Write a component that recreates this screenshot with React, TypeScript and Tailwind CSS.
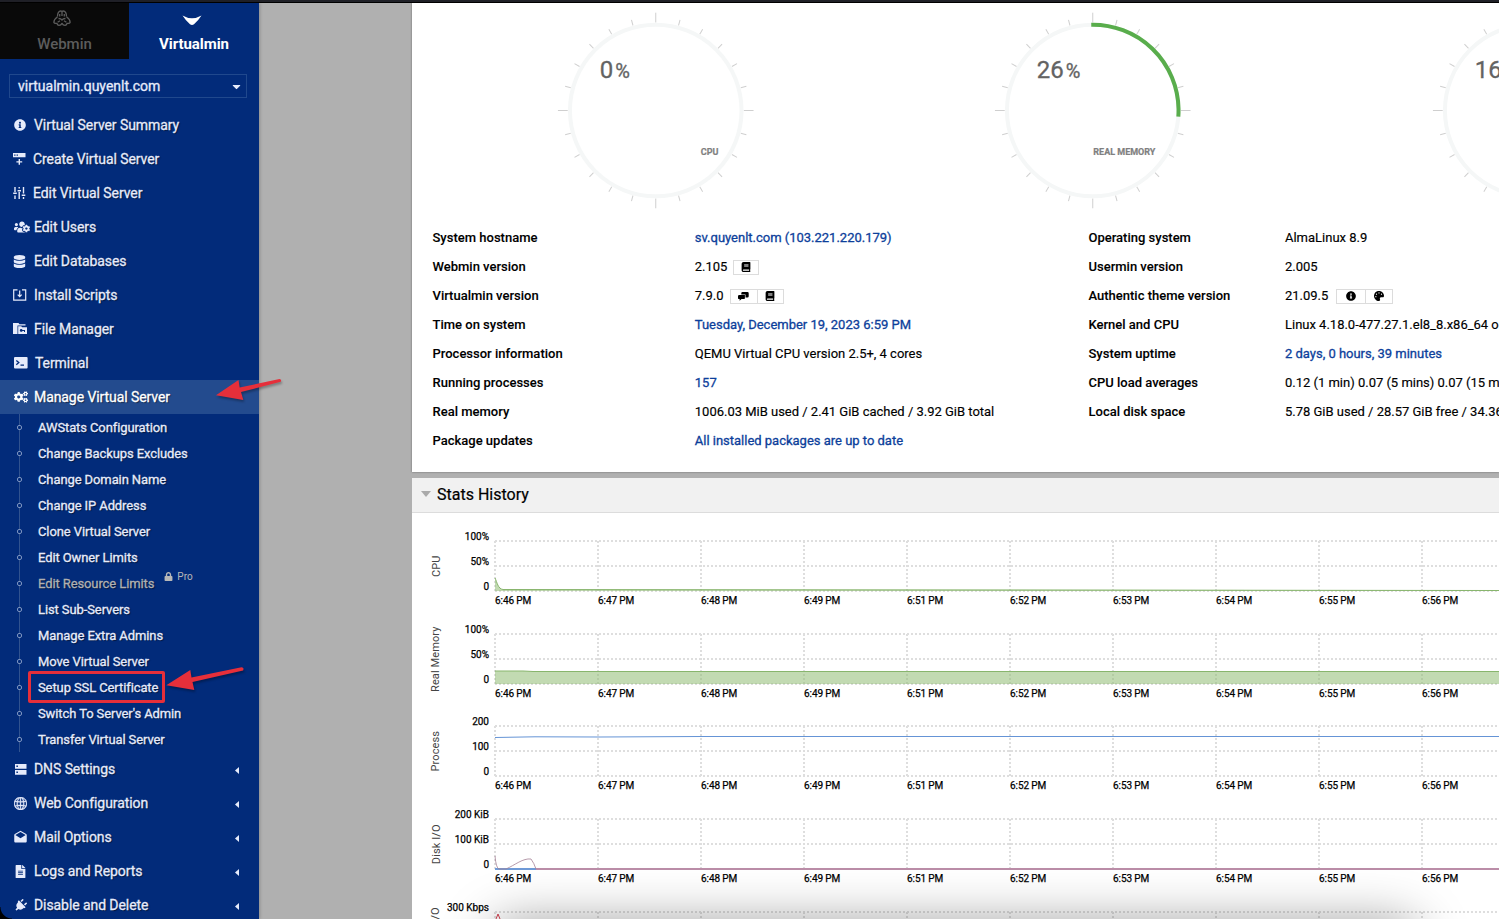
import type { ReactNode } from 'react';
import {
  FaBook, FaCaretDown, FaCogs, FaDatabase, FaFileAlt, FaInfoCircle,
  FaLock, FaPalette, FaPlug, FaUsersCog,
} from 'react-icons/fa';
import { MdDrafts } from 'react-icons/md';
import { SlGlobe } from 'react-icons/sl';

const CreateIcon = () => (
  <svg width="13" height="12" viewBox="0 0 13 12" fill="currentColor">
    <path fillRule="evenodd" d="M0 0h12.5v4.2H0zM1.2 1.4v1.3h1.3V1.4zM3.6 1.4v1.3h1.3V1.4z" />
    <path d="M5.6 6h1.4v2.2h2.2v1.4H7V11.8H5.6V9.600H3.400V8.200H5.600z" />
  </svg>
);

const SlidersIcon = () => (
  <svg width="13" height="12" viewBox="0 0 13 12" stroke="currentColor" strokeWidth="1.4">
    <path d="M2 0v5M2 8.500v3.500M6.200 0v1.500M6.200 5v7M10.500 0v6.500M10.500 10v2M.2 6.200h3.600M4.600 3.800h3.400M8.700 8.200h3.600" />
  </svg>
);

const InstallIcon = () => (
  <svg width="14" height="12" viewBox="0 0 14 12" fill="none" stroke="currentColor" strokeWidth="1.200">
    <path d="M4.500 .8H.7v10.400h12V.8H9M6.700 1.500v6M4.700 5.700l2 2 2-2" />
  </svg>
);

const FolderIcon = () => (
  <svg width="14" height="12" viewBox="0 0 14 12" fill="currentColor">
    <path d="M0 0h5.500l1 1.300h6v1.300H4.500V11H0z" />
    <path fillRule="evenodd" d="M5.200 3.300h3l1 1H14V11H5.200zM8.200 6a1.400 1.400 0 1 0 1.300 1.900H11v1h1v-1.800H9.500A1.400 1.400 0 0 0 8.200 6z" />
  </svg>
);

const TerminalIcon = () => (
  <svg width="14" height="12" viewBox="0 0 14 12">
    <rect width="13.600" height="11.600" rx="1" fill="currentColor" />
    <path d="M2.300 3.400l2.500 2.200-2.500 2.200M6.500 8.200h3.500" stroke="#022b7a" strokeWidth="1.300" fill="none" />
  </svg>
);

const DnsIcon = () => (
  <svg width="12" height="11" viewBox="0 0 12 11" fill="currentColor">
    <path fillRule="evenodd" d="M0 0h11.500v4.800H0zM1.400 1.600v1.500h1.500V1.600zM0 6h11.500v4.800H0zM1.400 7.600v1.500h1.500V7.600z" />
  </svg>
);

const ChatIcon = () => (
  <svg width="11" height="9" viewBox="0 0 11 9" fill="currentColor">
    <path d="M4.500 0h5a1.200 1.200 0 0 1 1.200 1.200v3a1.200 1.200 0 0 1-1.200 1.200H7.500V2.500H3.300V1.200A1.200 1.200 0 0 1 4.500 0z" />
    <path d="M1.200 3H6.900v2.900a1.200 1.200 0 0 1-1.200 1.200H3.500L1.600 8.800V7.100H1.200A1.200 1.200 0 0 1 0 5.900V4.200A1.200 1.200 0 0 1 1.200 3z" />
  </svg>
);

const WebminLogo = () => (
  <svg width="18" height="17" viewBox="0 0 18 17" fill="none" stroke="currentColor" strokeWidth="1.300" strokeLinejoin="round">
    <path d="M9 6V2.400Q9 1 7.800 1 4.600 1.200 4.500 6.500M9 6V2.400Q9 1 10.200 1 13.400 1.200 13.500 6.500M6.700 6.500V4M11.300 6.500V4" />
    <path d="M4.500 6.800Q.8 9.500.9 12.500q.4 1.300 3.300.8M13.500 6.800q3.700 2.700 3.600 5.700-.4 1.300-3.300.8M4.200 13.300q0 2 1.800 2 2 0 3-1.900 1 1.900 3 1.900 1.800 0 1.800-2M4.600 12.200L7 10.700M13.400 12.200L11 10.700M5.500 8.500q2.300-.1 3.500 1.500 1.200-1.600 3.500-1.500" />
  </svg>
);

type MenuEntry = { label: string; icon: ReactNode; pad?: string };

const topMenu: MenuEntry[] = [
  { label: 'Virtual Server Summary', icon: <FaInfoCircle size={12} />, pad: 'ml-[14px] w-5' },
  { label: 'Create Virtual Server', icon: <CreateIcon />, pad: 'ml-[13px] w-5' },
  { label: 'Edit Virtual Server', icon: <SlidersIcon />, pad: 'ml-[13px] w-5' },
  { label: 'Edit Users', icon: <FaUsersCog size={16} />, pad: 'ml-[14px] w-5' },
  { label: 'Edit Databases', icon: <FaDatabase size={13} />, pad: 'ml-[13px] w-[21px]' },
  { label: 'Install Scripts', icon: <InstallIcon />, pad: 'ml-[13px] w-[21px]' },
  { label: 'File Manager', icon: <FolderIcon />, pad: 'ml-[13px] w-[21px]' },
  { label: 'Terminal', icon: <TerminalIcon />, pad: 'ml-[14px] w-[21px]' },
];

const bottomMenu: MenuEntry[] = [
  { label: 'DNS Settings', icon: <DnsIcon />, pad: 'ml-[15px] w-[19px]' },
  { label: 'Web Configuration', icon: <SlGlobe size={13} strokeWidth={30} />, pad: 'ml-[14px] w-5' },
  { label: 'Mail Options', icon: <MdDrafts size={15} />, pad: 'ml-[13px] w-[21px]' },
  { label: 'Logs and Reports', icon: <FaFileAlt size={13} />, pad: 'ml-[14px] w-5' },
  { label: 'Disable and Delete', icon: <FaPlug size={13} className="rotate-45" />, pad: 'ml-[14px] w-5' },
];

const subMenu = [
  'AWStats Configuration', 'Change Backups Excludes', 'Change Domain Name',
  'Change IP Address', 'Clone Virtual Server', 'Edit Owner Limits',
  'Edit Resource Limits', 'List Sub-Servers', 'Manage Extra Admins',
  'Move Virtual Server', 'Setup SSL Certificate', "Switch To Server's Admin",
  'Transfer Virtual Server',
];

function MenuItem({ item, caret, active }: { item: MenuEntry; caret?: boolean; active?: boolean }) {
  return (
    <li className={`flex h-[34px] items-center ${active ? 'bg-[#234b8e] text-white' : ''}`}>
      <span className={`flex shrink-0 items-center ${item.pad}`}>{item.icon}</span>
      <span className="text-[14px] tracking-[-0.08px] [-webkit-text-stroke:0.3px] [text-shadow:1px_1px_1px_rgba(0,0,0,0.5)]">{item.label}</span>
      {caret && (
        <svg className="mt-0.5 mr-5 ml-auto" width="4" height="7" viewBox="0 0 4 7">
          <path d="M4 0v7L0 3.500z" fill="currentColor" />
        </svg>
      )}
    </li>
  );
}

function Sidebar() {
  return (
    <aside className="relative z-10 h-full w-[259px] shrink-0 bg-[#022b7a] text-[#e6ebfb] shadow-[1px_0_3px_rgba(0,0,0,0.2)]">
      <div className="flex h-14">
        <div className="flex w-[129px] flex-col items-center bg-[#090909] pt-[7px] text-[#5c5c5c]">
          <div className="-ml-1.5"><WebminLogo /></div>
          <span className="mt-[5px] text-[15px] leading-[24px] font-medium">Webmin</span>
        </div>
        <div className="flex w-[130px] flex-col items-center pt-3 text-white">
          <svg className="-ml-1" width="20" height="11" viewBox="0 0 20 11">
            <path d="M.5.500Q10 6 19.500.500 16 6 12 9.300q-2 1.500-4 0Q4 6 .5.500z" fill="currentColor" />
          </svg>
          <span className="mt-[6px] text-[15px] leading-[24px] font-bold tracking-[-0.06px]">Virtualmin</span>
        </div>
      </div>
      <div className="mt-[15px] ml-[9px] flex h-6 w-[238px] items-center justify-between border border-[#20488d] pr-[3px] pl-2">
        <span className="text-[14px] [-webkit-text-stroke:0.3px]">virtualmin.quyenlt.com</span>
        <FaCaretDown size={13} />
      </div>
      <ul className="mt-[10px]">
        {topMenu.map((item) => <MenuItem key={item.label} item={item} />)}
        <MenuItem item={{ label: 'Manage Virtual Server', icon: <FaCogs size={14} />, pad: 'ml-[14px] w-5' }} active />
      </ul>
      <ul className="ml-[19px] border-l border-[#31538f]">
        {subMenu.map((label) => (
          <li key={label} className="flex h-[26px] items-center">
            <span className="mt-px -ml-[3px] h-[5px] w-[5px] shrink-0 rounded-[2px] border border-[#7d94c0] bg-[#022b7a]" />
            <span
              className={`mt-0.5 ml-4 text-[13px] tracking-[-0.1px] [-webkit-text-stroke:0.3px] [text-shadow:1px_1px_1px_rgba(0,0,0,0.5)] ${label === 'Edit Resource Limits' ? 'text-[#b0b0b0]' : ''}`}
            >
              {label}
            </span>
            {label === 'Edit Resource Limits' && (
              <span className="mb-[13px] ml-[10px] flex items-center gap-1 text-[10px] text-[#b8b8b8]">
                <FaLock size={9} />
                Pro
              </span>
            )}
          </li>
        ))}
      </ul>
      <ul>
        {bottomMenu.map((item) => <MenuItem key={item.label} item={item} caret />)}
      </ul>
      {/* callouts */}
      <svg className="absolute top-[374px] left-[214px] drop-shadow-[1px_2px_1px_rgba(0,0,0,0.3)]" width="70" height="30" viewBox="0 0 70 30">
        <path d="M2 18.300L24.500 3l1.200 7.500L65.500 2q2.300.3 1.300 2.800L27 15l2.300 8z" fill="#e62f3a" />
      </svg>
      <div className="absolute top-[668px] left-[28px] h-8 w-[137px] rounded-[2px] border-3 border-[#e62f3a]" />
      <svg className="absolute top-[662px] left-[164px] drop-shadow-[1px_2px_1px_rgba(0,0,0,0.3)]" width="84" height="32" viewBox="0 0 84 32">
        <path d="M2.300 20.300L26.300 5l1.200 7.500L77.500 2.300q3 .2 1.600 3.200L28.500 17l1.800 8z" fill="#e62f3a" />
      </svg>
    </aside>
  );
}

function Gauge({ value, label, arc }: { value: string; label?: string; arc?: number }) {
  const ticks = Array.from({ length: 24 }, (_, i) => i * 15);
  const length = 2 * Math.PI * 85.800;
  return (
    <svg className="w-[437.500px] shrink-0" height="220" viewBox="-218.750 -107.500 437.500 220">
      {ticks.map((deg) => (
        <line
          key={deg}
          y1={deg % 90 === 0 ? -97.800 : -93.800}
          y2="-88"
          stroke="#cfcfcf"
          strokeWidth="1"
          transform={`rotate(${deg})`}
        />
      ))}
      <circle r="85.800" fill="none" stroke="#f5f7f7" strokeWidth="4" />
      {arc && (
        <circle
          r="85.800"
          fill="none"
          stroke="#59ad4c"
          strokeWidth="4"
          strokeDasharray={`${(length * arc) / 100} ${length}`}
          transform="rotate(-91)"
        />
      )}
      <text x="-56" y="-32.800" fontSize="24" fill="#636363" stroke="#636363" strokeWidth=".3">
        {value}
        <tspan dx="2" fontSize="20">%</tspan>
      </text>
      {label && (
        <text x="62.700" y="44.500" fontSize="9" fontWeight="700" fill="#808080" stroke="#808080" strokeWidth=".2" textAnchor="end">{label}</text>
      )}
    </svg>
  );
}

function Buttons({ icons, wide }: { icons: ReactNode[]; wide?: boolean }) {
  return (
    <span className={`mt-px flex h-[15px] border border-[#dcdcdc] text-black ${wide ? 'ml-[8px]' : 'ml-[6px]'}`}>
      {icons.map((icon, i) => (
        <span
          key={i}
          className={`flex items-center justify-center ${i ? 'border-l border-[#dcdcdc]' : ''} ${wide ? 'w-[27.500px]' : i ? 'w-[26px]' : icons.length > 1 ? 'w-[26px]' : 'w-[24px]'}`}
        >
          {icon}
        </span>
      ))}
    </span>
  );
}

type Row = { name: string; value: string; link?: boolean; icons?: ReactNode[]; wide?: boolean };

const leftRows: Row[] = [
  { name: 'System hostname', value: 'sv.quyenlt.com (103.221.220.179)', link: true },
  { name: 'Webmin version', value: '2.105', icons: [<FaBook size={10} />] },
  { name: 'Virtualmin version', value: '7.9.0', icons: [<ChatIcon />, <FaBook size={10} />] },
  { name: 'Time on system', value: 'Tuesday, December 19, 2023 6:59 PM', link: true },
  { name: 'Processor information', value: 'QEMU Virtual CPU version 2.5+, 4 cores' },
  { name: 'Running processes', value: '157', link: true },
  { name: 'Real memory', value: '1006.03 MiB used / 2.41 GiB cached / 3.92 GiB total' },
  { name: 'Package updates', value: 'All installed packages are up to date', link: true },
];

const rightRows: Row[] = [
  { name: 'Operating system', value: 'AlmaLinux 8.9' },
  { name: 'Usermin version', value: '2.005' },
  { name: 'Authentic theme version', value: '21.09.5', icons: [<FaInfoCircle size={10} />, <FaPalette size={10} />], wide: true },
  { name: 'Kernel and CPU', value: 'Linux 4.18.0-477.27.1.el8_8.x86_64 on x86_64' },
  { name: 'System uptime', value: '2 days, 0 hours, 39 minutes', link: true },
  { name: 'CPU load averages', value: '0.12 (1 min) 0.07 (5 mins) 0.07 (15 mins)' },
  { name: 'Local disk space', value: '5.78 GiB used / 28.57 GiB free / 34.36 GiB total' },
];

function InfoTable({ rows, nameWidth }: { rows: Row[]; nameWidth: string }) {
  return (
    <div className="shrink-0">
      {rows.map((row) => (
        <div key={row.name} className="flex h-[29px] items-center text-[13px] whitespace-nowrap text-black">
          <span className={`${nameWidth} shrink-0 font-medium [-webkit-text-stroke:0.1px]`}>{row.name}</span>
          <span className={`tracking-[-0.01px] ${row.link ? 'text-[#0d3f9b] [-webkit-text-stroke:0.3px]' : '[-webkit-text-stroke:0.150px]'}`}>
            {row.value}
          </span>
          {row.icons && <Buttons icons={row.icons} wide={row.wide} />}
        </div>
      ))}
    </div>
  );
}

const times = ['6:46', '6:47', '6:48', '6:49', '6:51', '6:52', '6:53', '6:54', '6:55', '6:56'];

function Chart({ title, ticks, height, children }: {
  title: string; ticks: string[]; height: string; children?: ReactNode;
}) {
  return (
    <div className={`flex shrink-0 ${height}`}>
      <div className="flex h-[50px] w-[46px] items-center justify-center pl-[3px]">
        <span className="-rotate-90 text-[11px] tracking-[0.1px] whitespace-nowrap text-[#444]">{title}</span>
      </div>
      <div className="-mt-[12px] w-[31px]">
        {ticks.map((tick) => (
          <div key={tick} className="flex h-[25px] items-start justify-end text-[10px] leading-[15px] whitespace-nowrap text-black [-webkit-text-stroke:0.25px]">
            {tick}
          </div>
        ))}
      </div>
      <div className="ml-[6px] w-[1004px]">
        <svg className="block overflow-visible" width="1004" height="50">
          <g stroke="#dedede" strokeWidth="2" strokeDasharray="2 2">
            <path d="M0 0H1004M0 25H1004M0 50H1004" />
            {times.map((time, i) => <path key={time} d={`M${i * 103} 0V50`} />)}
          </g>
          {children}
        </svg>
        <div className="mt-[3px] flex">
          {times.map((time) => (
            <span key={time} className="w-[103px] shrink-0 text-[10px] leading-[14px] tracking-[-0.08px] text-black [-webkit-text-stroke:0.25px]">
              {`${time} PM`}
            </span>
          ))}
        </div>
      </div>
    </div>
  );
}

function StatsHistory() {
  return (
    <section className="mt-[6px] h-[441px] overflow-hidden bg-white">
      <div className="flex h-[35px] items-center border-b border-[#dcdcdc] bg-[#f1f1f1] pl-[9px]">
        <svg className="-mt-[3px]" width="10" height="6" viewBox="0 0 10 6"><path d="M0 0h10L5 6z" fill="#aaa" /></svg>
        <span className="ml-[6px] text-[16px] text-black [-webkit-text-stroke:0.2px]">Stats History</span>
      </div>
      <div className="flex flex-col pt-7">
        <Chart title="CPU" ticks={['100%', '50%', '0']} height="h-[93px]">
          <path d="M0 37C2 41 3 48 8 48.500L1004 49V50H0z" fill="#8fbb73" fillOpacity=".55" />
          <path d="M0 37C2 41 3 48 8 48.500L1004 49.500" fill="none" stroke="#88b56d" />
        </Chart>
        <Chart title="Real Memory" ticks={['100%', '50%', '0']} height="h-[92px]">
          <path d="M0 37H28L38 37.500H1004V50H0z" fill="#8fbb73" fillOpacity=".55" />
          <path d="M0 37H28L38 37.500H1004" fill="none" stroke="#88b56d" />
        </Chart>
        <Chart title="Process" ticks={['200', '100', '0']} height="h-[93px]">
          <path d="M0 11.500L40 10.800L105 11L205 10.500H1004" fill="none" stroke="#6594d6" />
        </Chart>
        <Chart title="Disk I/O" ticks={['200 KiB', '100 KiB', '0']} height="h-[93px]">
          <path d="M0 50H42" stroke="#6f9bd8" strokeWidth="2" />
          <path d="M0 37Q1 49 4 50H11C20 46 28 39 36 40Q39 44 41 50" fill="none" stroke="#a58296" strokeWidth=".800" />
          <path d="M41 50H1004" stroke="#bb8da8" strokeWidth="2" />
        </Chart>
        <Chart title="Network I/O" ticks={['300 Kbps']} height="h-[93px]">
          <path d="M1 7L3 2L5 7" fill="none" stroke="#d0414f" />
        </Chart>
      </div>
    </section>
  );
}

export default function App() {
  return (
    <div className="relative flex h-[919px] w-[1499px] flex-col overflow-hidden bg-[#b0b0b0] font-[Roboto,sans-serif]">
      <div className="h-[3px] shrink-0 border-b border-black bg-[#202128]" />
      <div className="flex min-h-0 flex-1">
        <Sidebar />
        <main className="ml-[153px] w-[1087px] shrink-0">
          <section className="h-[469px] overflow-hidden bg-white shadow-[0_0_2px_rgba(0,0,0,0.4)]">
            <div className="ml-[24.500px] flex h-[220px] w-[1320px]">
              <Gauge value="0" label="CPU" />
              <Gauge value="26" label="REAL MEMORY" arc={26.400} />
              <Gauge value="16" />
            </div>
            <div className="ml-[20.500px] flex">
              <InfoTable rows={leftRows} nameWidth="w-[262.300px]" />
              <div className="ml-auto w-[410.500px]">
                <InfoTable rows={rightRows} nameWidth="w-[196.500px]" />
              </div>
            </div>
          </section>
          <StatsHistory />
        </main>
      </div>
      {/* dock shadow and window edge */}
      <div className="pointer-events-none absolute top-[931px] left-[500px] h-10 w-[910px] rounded-2xl shadow-[0_0_50px_10px_rgba(0,0,0,0.38)]" />
      <div className="pointer-events-none absolute bottom-0 left-0 z-20 h-3 w-3 bg-[radial-gradient(circle_at_12px_0px,transparent_11px,#000_12px)]" />
    </div>
  );
}
